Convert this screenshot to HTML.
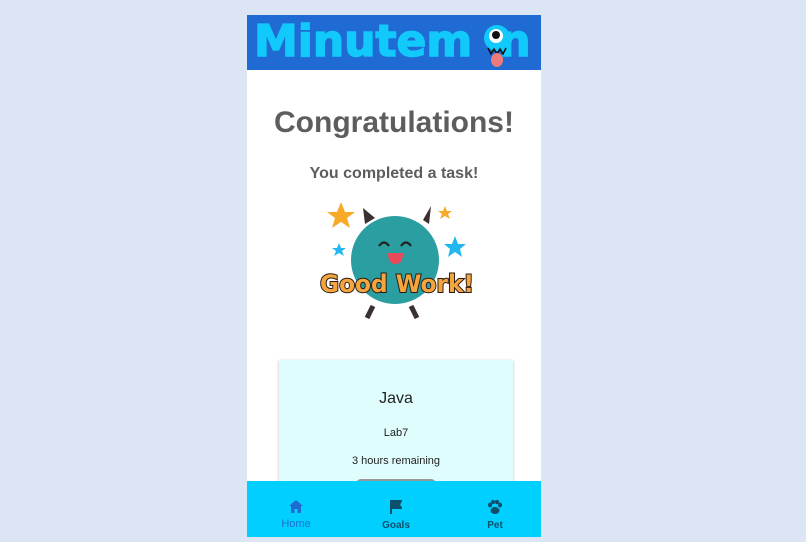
<!DOCTYPE html>
<html><head><style>
body{margin:0;width:806px;height:542px;background:#dce5f3;font-family:"Liberation Sans",sans-serif;position:relative;overflow:hidden}
.ph{position:absolute;left:247px;top:15px;width:294px;height:522px;background:#fff;overflow:hidden}
.hd{position:absolute;left:0;top:0;width:294px;height:55px;background:#1f6bd3;overflow:hidden}
.logo{position:absolute;left:7px;top:1px;font-size:44px;font-weight:900;color:#12c9fb;letter-spacing:0px;font-family:"DejaVu Sans",sans-serif;line-height:52px;-webkit-text-stroke:1.5px #12c9fb;white-space:nowrap}
h1{position:absolute;left:0;width:294px;top:91px;margin:0;text-align:center;font-size:30px;color:#5d5d5d;font-weight:bold}
.sub{position:absolute;left:0;width:294px;top:150px;text-align:center;font-size:16px;color:#5d5d5d;font-weight:bold}
.card{position:absolute;left:32px;top:345px;width:234px;height:140px;background:#e0fdfe;box-shadow:0 1px 3px rgba(0,0,0,.25);text-align:center;color:#222}
.nav{position:absolute;left:0;top:466px;width:294px;height:56px;background:#00cfff}
.ni{position:absolute;top:19px;width:60px;text-align:center;font-size:10px;font-weight:bold;color:#0b4f6c;line-height:14px}
</style></head><body>
<div class="ph">
<div class="hd"><div class="logo">Minutem<span style="display:inline-block;width:27px"></span>n</div>
<svg style="position:absolute;left:236px;top:9px" width="30" height="46"><circle cx="14" cy="14" r="13" fill="#12c9fb"/><circle cx="13" cy="12" r="7" fill="#fff"/><circle cx="13" cy="11" r="4" fill="#111"/><path d="M5 24 L8 30 L11 25 L14 30 L17 25 L20 30 L23 24" stroke="#111" fill="none" stroke-width="1.5"/><ellipse cx="14" cy="36" rx="6" ry="7" fill="#f07a7a"/></svg>
</div>
<h1>Congratulations!</h1>
<div class="sub">You completed a task!</div>
<svg style="position:absolute;left:66px;top:185px" width="170" height="122">
<polygon points="28,2 32,12 42,12 34,18 37,28 28,22 19,28 22,18 14,12 24,12" fill="#f7a92a"/>
<polygon points="132,6 134,11 139,11 135,14 137,19 132,16 127,19 129,14 125,11 130,11" fill="#f7a92a"/>
<polygon points="142,36 145,44 153,44 147,49 149,57 142,52 135,57 137,49 131,44 139,44" fill="#22b8ef"/>
<polygon points="26,43 28,48 33,48 29,51 31,56 26,53 21,56 23,51 19,48 24,48" fill="#22b8ef"/>
<path d="M60 106 l-6 12 M98 106 l6 12" stroke="#3a3030" stroke-width="5"/>
<path d="M52 24 L50 8 L62 18Z M110 20 L118 6 L116 24Z" fill="#3a3030"/>
<circle cx="82" cy="60" r="44" fill="#2a9ea0"/>
<path d="M66 46 q5-7 10 0 M88 46 q5-7 10 0" stroke="#222" stroke-width="2.2" fill="none"/>
<path d="M75 53 h15 q0 11 -7.5 11 q-7.5 0 -7.5 -11z" fill="#e84a5a"/>
<text x="84" y="92" text-anchor="middle" font-family="DejaVu Sans" font-weight="900" font-size="24" textLength="154" lengthAdjust="spacingAndGlyphs" fill="#f4a540" stroke="#2a1a10" stroke-width="2" paint-order="stroke">Good Work!</text>
</svg>
<div class="card">
<div style="position:absolute;top:30px;width:100%;font-size:16px">Java</div>
<div style="position:absolute;top:67px;width:100%;font-size:11px">Lab7</div>
<div style="position:absolute;top:95px;width:100%;font-size:11px">3 hours remaining</div>
<div style="position:absolute;top:119px;left:77px;width:80px;height:10px;background:#999;border-radius:5px"></div>
</div>
<div class="nav">
<div class="ni" style="left:19px;color:#1f6bd3;font-size:11px;font-weight:normal"><svg width="14" height="13" viewBox="0 0 14 13"><path d="M7 0 L14 6 H12 V13 H8.5 V9 H5.5 V13 H2 V6 H0Z" fill="#1f6bd3"/></svg><br>Home</div>
<div class="ni" style="left:119px"><svg width="12" height="14"><path d="M1 0 V14 M1 1 H11 L9 4.5 L11 8 H1" stroke="#0b4f6c" stroke-width="2" fill="#0b4f6c"/></svg><br>Goals</div>
<div class="ni" style="left:218px"><svg width="16" height="14"><ellipse cx="3" cy="5" rx="2" ry="2.5" fill="#0b4f6c"/><ellipse cx="6" cy="2" rx="2" ry="2.3" fill="#0b4f6c"/><ellipse cx="10" cy="2" rx="2" ry="2.3" fill="#0b4f6c"/><ellipse cx="13" cy="5" rx="2" ry="2.5" fill="#0b4f6c"/><ellipse cx="8" cy="10.5" rx="4.5" ry="3.5" fill="#0b4f6c"/></svg><br>Pet</div>
</div>
</div>
</body></html>
